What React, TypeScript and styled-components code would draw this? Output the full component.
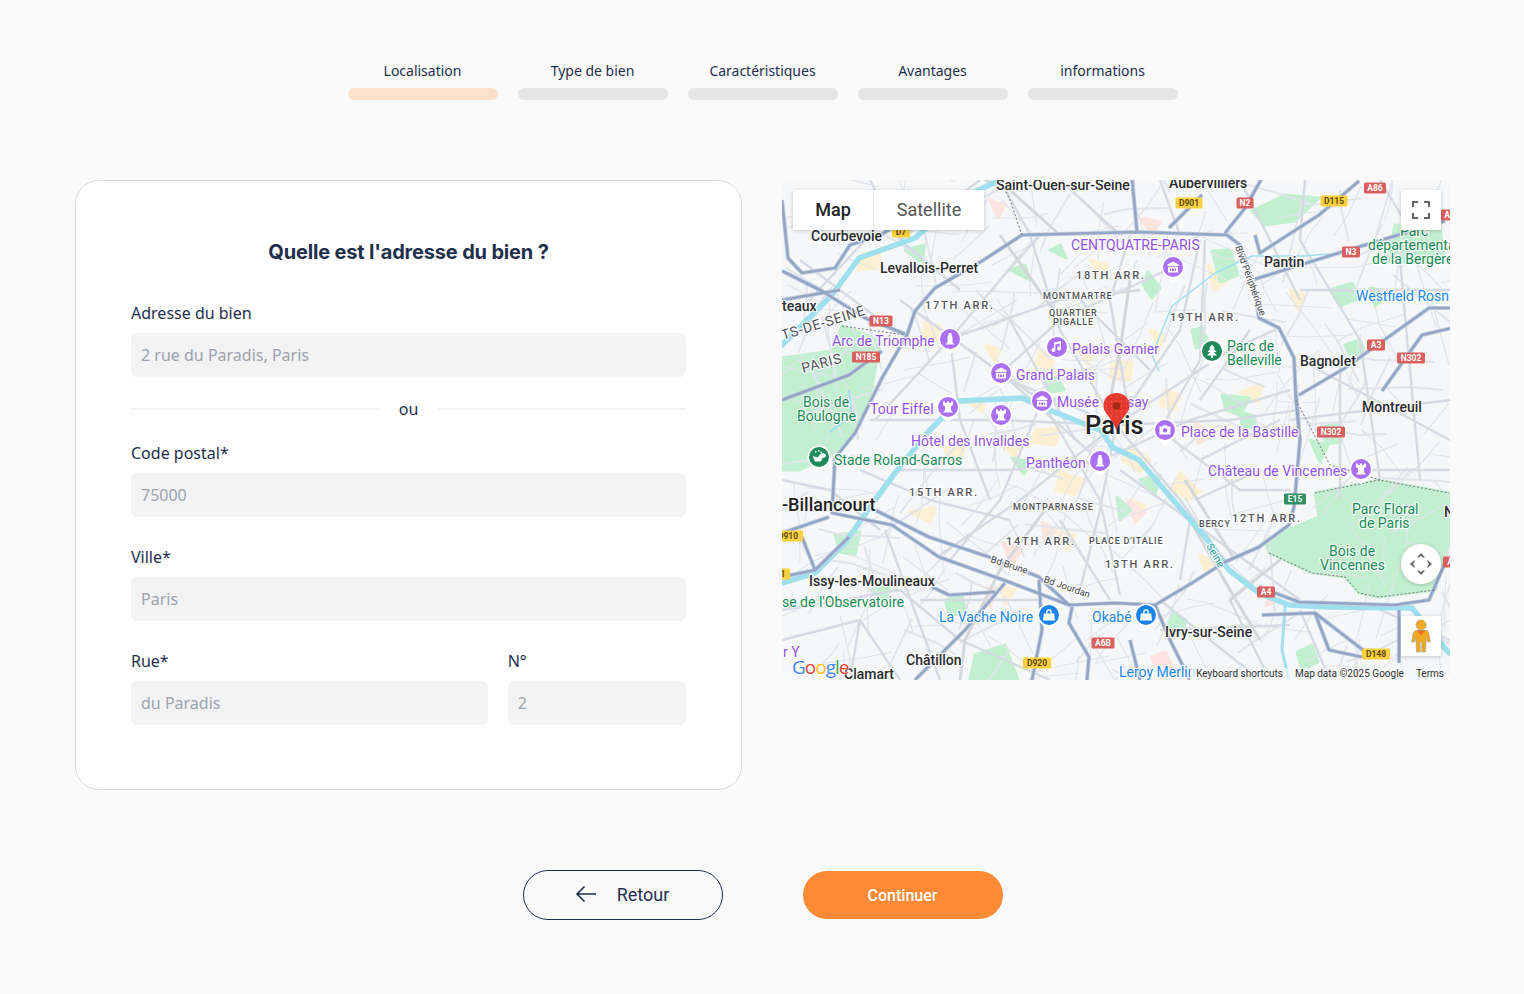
import React from "react";
import styled, { createGlobalStyle } from "styled-components";

const Global = createGlobalStyle`
  html, body { margin: 0; padding: 0; background: #fafafa; }
  body { font-family: "Noto Sans", "Open Sans", sans-serif; color: #1e2f4d; }
  * { box-sizing: border-box; }
`;

const Page = styled.div`
  width: 1524px; height: 994px; display: flex; flex-direction: column; align-items: center;
`;
const Stepper = styled.nav`
  display: flex; gap: 20px; padding-top: 60px; height: 180px; margin-left: 1px;
`;
const Step = styled.div`
  width: 150px; display: flex; flex-direction: column; align-items: center; gap: 6px;
`;
const StepLabel = styled.span`
  font-size: 14px; line-height: 22px; letter-spacing: -0.01px; color: #1e2f4d;
`;
const StepBar = styled.span<{ $active?: boolean }>`
  width: 100%; height: 12px; border-radius: 6px; background: ${p => (p.$active ? "#ffe0cb" : "#e5e5e6")};
`;
const Columns = styled.main`
  width: 1375px; display: grid; grid-template-columns: 667px 668px; gap: 40px; align-items: start; margin-left: 1px;
`;
const Card = styled.section`
  height: 610px; background: #fff; border: 1px solid #d8dae0; border-radius: 24px; padding: 56px 55px 64px 55px;
  display: flex; flex-direction: column;
`;
const Title = styled.h1`
  margin: 1px 0 35px; font: 700 20px/28px Inter, "Noto Sans", sans-serif; letter-spacing: -0.18px; text-align: center; color: #1e2f4d;
`;
const Field = styled.label`
  display: flex; flex-direction: column; gap: 8px; min-width: 0;
`;
const FieldLabel = styled.span`
  font-size: 16px; line-height: 24px; color: #1e2f4d;
`;
const Input = styled.input`
  width: 100%; height: 44px; border: 0; border-radius: 6px; background: #f3f3f4; padding: 0 10px;
  font: 400 16px "Noto Sans", sans-serif; color: #9ca3af; outline: none;
  &::placeholder { color: #9ca3af; opacity: 1; }
`;
const Divider = styled.div`
  display: flex; align-items: center; gap: 20px; margin: 20px 0; font-size: 16px; line-height: 24px;
  &::before, &::after { content: ""; flex: 1; height: 2px; background: #f3f3f4; }
`;
const Stack = styled.div`
  display: flex; flex-direction: column; gap: 28px;
`;
const TwoCols = styled.div`
  display: grid; grid-template-columns: 2fr 1fr; gap: 20px;
`;
const MapFrame = styled.div`
  position: relative; height: 500px; border-radius: 10px; overflow: hidden; background: #f6f7f8;
`;
const MapSvg = styled.svg`
  display: block; width: 100%; height: 100%;
`;
const MapLabel = styled.text<{ $c: string; $s: number; $w?: number; $ls?: number }>`
  font-family: Roboto, sans-serif; font-size: ${p => p.$s}px; font-weight: ${p => p.$w ?? 400};
  letter-spacing: ${p => p.$ls ?? 0}px; fill: ${p => p.$c};
  paint-order: stroke; stroke: rgba(255,255,255,.85); stroke-width: 2.5px; stroke-linejoin: round;
`;
const Badge = styled.text`
  font: 700 8.5px Roboto, sans-serif; text-anchor: middle;
`;
const MapTypes = styled.div`
  position: absolute; left: 11px; top: 10px; display: flex; height: 40px; background: #fff; box-shadow: 0 1px 4px rgba(0,0,0,.2);
`;
const MapType = styled.button<{ $on?: boolean }>`
  border: 0; background: #fff; padding: 0 0 2px; width: ${p => (p.$on ? "80px" : "111px")}; margin: 0;
  font: ${p => (p.$on ? 500 : 400)} 18px Roboto, sans-serif; color: ${p => (p.$on ? "#222" : "#565656")};
  & + & { border-left: 1px solid #eee; }
`;
const MapControl = styled.button<{ $round?: boolean; $top?: number }>`
  position: absolute; right: 9.5px; width: 40px; height: 40px; border: 0; padding: 0; background: #fff;
  top: ${p => `${p.$top ?? 0}px`};
  border-radius: ${p => (p.$round ? "50%" : "0")}; box-shadow: 0 1px 4px rgba(0,0,0,.2);
  display: flex; align-items: center; justify-content: center;
`;
const Attribution = styled.div`
  position: absolute; right: 0; bottom: 0; height: 12px; display: flex; align-items: center;
  font: 400 10px Roboto, sans-serif; color: #333;
`;
const AttrItem = styled.span`
  background: rgba(246,247,248,.75); padding: 0 6px; line-height: 12px; white-space: nowrap;
`;
const GoogleLogo = styled.div`
  position: absolute; left: 10px; bottom: 2px; font: 400 19px/22px "Open Sans", sans-serif; letter-spacing: -1px;
  text-shadow: 0 0 2px #fff, 0 0 2px #fff;
`;
const Letter = styled.span<{ $c: string }>`
  color: ${p => p.$c};
`;
const Actions = styled.footer`
  display: flex; gap: 80px; justify-content: center; align-items: center; height: 50px; margin-top: 80px; margin-left: 1px;
`;
const BackButton = styled.button`
  width: 200px; height: 50px; border: 1px solid #1e2f4d; border-radius: 25px; background: transparent; color: #1e2f4d;
  font: 400 18px Roboto, sans-serif; display: flex; align-items: center; justify-content: center; gap: 20px; padding: 0 1px 2px 0;
`;
const NextButton = styled.button`
  width: 200px; height: 48px; border: 0; border-radius: 24px; background: #ff8a36; color: #fff;
  font: 500 16px Roboto, sans-serif;
`;

const major = [
  "1022,235 982,261 935,288 915,311 907,335 882,378 855,433 835,458 832,513 892,525 939,557 1009,582 1069,605 1115,603 1155,605 1192,583 1225,562 1259,547 1289,525 1294,507 1300,440 1296,400 1294,358 1279,328 1259,318 1252,278 1240,245 1227,235 1137,232 1022,235",
  "875,510 929,537 989,557 1039,577 1069,605",
  "782,271 822,291 865,318 905,334",
  "782,400 849,375 882,351",
  "1132,178 1137,232", "1169,228 1202,195", "1225,233 1245,208 1262,178",
  "1255,235 1260,253 1319,215 1359,181", "1252,280 1345,251 1445,221",
  "1299,395 1345,368 1429,308 1452,308", "1382,391 1422,335 1452,328",
  "1259,587 1299,602 1395,605 1429,600 1445,563", "1399,610 1399,663", "1262,615 1315,613 1372,657",
  "1315,613 1329,650 1362,657", "1072,607 1069,623 1089,657 1087,680", "1039,580 1042,630 1032,680",
  "1005,583 965,630 915,680", "932,587 949,595 995,592", "782,577 815,570 849,537", "815,570 802,537",
  "782,533 829,517", "782,200 788,258 802,273 835,268 850,245 880,235 925,210", "782,300 840,290",
  "1296,395 1299,430", "1155,605 1170,640 1190,680", "1130,640 1140,680",
];
const minor = [
  "1116,425 1060,330 1030,235", "1116,425 1180,330 1200,240", "1116,425 1010,380 915,311", "1116,425 1000,420 870,420",
  "1116,425 1020,500 940,555", "1116,425 1100,510 1080,590", "1116,425 1180,500 1225,560", "1116,425 1230,420 1298,410",
  "1116,425 1230,350 1275,330", "950,339 1000,280 1040,235", "950,339 1060,300 1140,290", "950,339 960,420 990,500",
  "950,339 875,420", "900,300 1001,373 1100,461", "1173,267 1060,320 1001,373", "1001,373 1042,401 1100,500 1120,595",
  "1042,401 1000,500 950,560", "1100,461 1190,420 1290,390", "1100,461 1010,470 900,470", "1160,430 1240,490 1290,490",
  "1160,430 1200,360 1205,240", "1290,420 1450,400", "1300,360 1450,440", "1300,290 1450,290", "1300,240 1360,340 1380,480",
  "1295,470 1450,470", "1340,360 1340,500", "1400,260 1420,480", "1000,180 1030,235", "1060,180 1120,235", "1130,235 1110,300 1130,420",
  "1160,180 1180,235", "870,180 900,240 960,290", "800,260 880,320", "800,310 870,235", "900,240 980,180", "782,480 830,490 880,530",
  "860,470 930,500 1010,520", "885,530 940,680", "782,610 900,590 960,640 1050,680", "782,640 860,620 900,680", "860,620 850,680",
  "920,600 1040,600", "1060,520 1110,600", "1120,470 1300,600", "1190,520 1180,580", "1160,600 1260,680", "1230,600 1270,680",
  "1300,610 1330,680", "1160,630 1290,625", "1380,610 1450,640", "1200,460 1280,420", "1240,180 1300,300", "1300,240 1305,180",
  "1380,180 1410,230", "1250,330 1200,400", "1195,500 1260,470", "1010,320 1075,440", "1080,300 1150,370",
];
const railway = [
  "1060,235 1010,190 985,180", "1130,280 1120,350 1110,400", "1000,235 1060,320", "1190,520 1230,590 1260,640", "1185,480 1235,560", "960,680 965,640 1000,570 1045,510", "1230,600 1280,560",
];
const greens = [
  "842,326 880,340 870,400 850,440 830,455 800,470 782,470 782,358 832,351",
  "1315,493 1379,480 1449,493 1449,543 1435,590 1379,597 1359,593 1345,577 1312,573 1269,553 1265,540 1319,517",
  "1252,211 1285,195 1319,198 1295,221 1265,225", "1212,251 1230,250 1238,275 1220,282", "1192,330 1203,328 1208,343 1196,348",
  "1222,395 1250,398 1240,415 1226,410", "1330,290 1352,283 1360,298 1340,306", "1370,288 1392,292 1375,306", "1395,225 1440,228 1445,262 1388,262",
  "835,535 860,532 855,555 840,552", "975,655 1005,645 1018,680 970,680", "1045,380 1058,377 1064,390 1050,392", "1148,272 1160,288 1152,298 1143,285",
  "1240,412 1254,416 1256,428 1242,426", "1012,458 1030,462 1024,474", "1117,497 1131,510 1120,520", "1322,427 1338,424 1342,442 1326,444",
  "1297,652 1312,645 1318,662 1302,670", "1172,612 1186,620 1182,634 1168,630", "1310,440 1328,445 1320,462", "905,250 925,245 922,262", "1010,270 1025,265 1030,280",
  "1050,250 1060,245 1066,258", "945,600 962,595 966,612 950,616", "870,590 890,585 886,602", "1345,345 1360,340 1365,352 1350,356", "1140,480 1160,475 1155,495",
];
const peach = [
  "925,322 940,326 938,340 922,336", "1040,350 1055,355 1050,370 1036,364", "1112,362 1132,362 1130,380 1110,378", "1130,445 1150,460 1140,472 1122,460",
  "1002,442 1020,445 1014,458", "1060,472 1085,480 1075,495 1056,490", "910,512 935,508 930,522", "1180,472 1200,492 1188,500 1172,488", "945,447 965,444 962,460 948,460",
  "1208,265 1226,282 1214,290", "1240,392 1262,385 1258,402", "1165,390 1180,395 1175,410 1160,405", "1075,345 1095,350 1088,365", "985,345 1000,350 995,362",
  "1150,330 1165,335 1160,348", "1090,260 1108,265 1102,278", "1055,530 1075,535 1068,550", "1000,585 1015,590 1005,605", "1290,290 1305,295 1298,310", "860,255 880,250 878,268 858,270", "1200,555 1214,562 1206,575",
  "1128,500 1145,505 1138,520", "965,400 985,398 982,412", "1035,430 1060,428 1055,445 1032,442",
];
const pink = [
  "1127,500 1145,512 1135,522", "1042,522 1056,530 1045,542", "987,587 998,590 990,606", "1270,592 1280,600 1266,606", "1195,422 1212,436 1198,444", "1152,657 1160,678 1174,672 1166,652", "1002,542 1022,550 1012,565", "1140,218 1160,222 1152,235", "990,200 1005,205 998,218",
];

function buildStreets(): string[] {
  let seed = 73;
  const rnd = () => { seed = (seed * 1664525 + 1013904223) % 4294967296; return seed / 4294967296; };
  const out: string[] = [];
  for (let i = 0; i < 340; i++) {
    const x = 782 + rnd() * 668, y = 180 + rnd() * 500;
    const a = rnd() * Math.PI * 2, l = 18 + rnd() * 46;
    const b = a + (rnd() - 0.5) * 0.5, m = 10 + rnd() * 24;
    const x2 = x + Math.cos(a) * l, y2 = y + Math.sin(a) * l;
    out.push(`${x.toFixed(0)},${y.toFixed(0)} ${x2.toFixed(0)},${y2.toFixed(0)} ${(x2 + Math.cos(b) * m).toFixed(0)},${(y2 + Math.sin(b) * m).toFixed(0)}`);
  }
  return out;
}
const streets = buildStreets();

type K = "city" | "arr" | "small" | "purple" | "green" | "blue";
const styles: Record<K, { c: string; s: number; w?: number; ls?: number }> = {
  city: { c: "#2a2a2e", s: 14, w: 500 },
  arr: { c: "#55565c", s: 11, w: 500, ls: 1.75 },
  small: { c: "#4f5055", s: 9, w: 500, ls: 0.8 },
  purple: { c: "#9252ea", s: 14, ls: 0.02 },
  green: { c: "#188a58", s: 14 },
  blue: { c: "#2186ea", s: 14 },
};
const labels: [string, number, number, K][] = [
  ["Saint-Ouen-sur-Seine", 996, 190, "city"], ["Aubervilliers", 1169, 188, "city"], ["Courbevoie", 811, 241, "city"],
  ["Levallois-Perret", 880, 273, "city"], ["teaux", 782, 311, "city"], ["Pantin", 1264, 267, "city"], ["Bagnolet", 1300, 366, "city"],
  ["Montreuil", 1362, 412, "city"], ["Issy-les-Moulineaux", 809, 586, "city"], ["Châtillon", 906, 665, "city"], ["Clamart", 844, 679, "city"],
  ["Ivry-sur-Seine", 1165, 637, "city"], ["N", 1444, 517, "city"],
  ["18TH ARR.", 1076, 279, "arr"], ["17TH ARR.", 925, 309, "arr"], ["19TH ARR.", 1170, 321, "arr"], ["15TH ARR.", 909, 496, "arr"],
  ["14TH ARR.", 1006, 545, "arr"], ["13TH ARR.", 1105, 568, "arr"], ["12TH ARR.", 1232, 522, "arr"],
  ["MONTMARTRE", 1043, 299, "small"], ["QUARTIER", 1049, 316, "small"], ["PIGALLE", 1053, 325, "small"], ["MONTPARNASSE", 1013, 510, "small"],
  ["PLACE D'ITALIE", 1089, 544, "small"], ["BERCY", 1199, 527, "small"],
  ["CENTQUATRE-PARIS", 1071, 250, "purple"], ["Arc de Triomphe", 832, 346, "purple"], ["Palais Garnier", 1072, 354, "purple"], ["Grand Palais", 1016, 380, "purple"],
  ["Musée", 1057, 407, "purple"], ["say", 1127, 407, "purple"], ["Tour Eiffel", 870, 414, "purple"], ["Hôtel des Invalides", 911, 446, "purple"],
  ["Panthéon", 1026, 468, "purple"], ["Place de la Bastille", 1181, 437, "purple"], ["Château de Vincennes", 1208, 476, "purple"], ["r Y", 783, 657, "purple"],
  ["Bois de", 803, 407, "green"], ["Boulogne", 797, 421, "green"], ["Stade Roland-Garros", 834, 465, "green"], ["Parc de", 1227, 351, "green"], ["Belleville", 1227, 365, "green"],
  ["Parc", 1400, 236, "green"], ["départementa", 1368, 250, "green"], ["de la Bergère", 1372, 264, "green"], ["Parc Floral", 1352, 514, "green"], ["de Paris", 1359, 528, "green"],
  ["Bois de", 1329, 556, "green"], ["Vincennes", 1320, 570, "green"], ["se de l'Observatoire", 782, 607, "green"],
  ["Westfield Rosn", 1356, 301, "blue"], ["La Vache Noire", 939, 622, "blue"], ["Okabé", 1092, 622, "blue"], ["Leroy Merlin", 1119, 677, "blue"],
];
const turned: [string, number, number, number, string, number, number?][] = [
  ["TS-DE-SEINE", 783, 340, -17, "#55565c", 14, 0.7], ["PARIS", 803, 373, -15, "#55565c", 14, 0.7],
  ["Blvd Périphérique", 1235, 247, 70, "#44454a", 9.5], ["Bd Brune", 990, 562, 18, "#44454a", 9.5], ["Bd Jourdan", 1043, 582, 19, "#44454a", 9.5], ["Seine", 1206, 546, 60, "#2f9d9b", 10.5],
];
const badges: [string, number, number, string, number][] = [
  ["N13", 881, 321, "r", 23], ["N185", 866, 357, "r", 28], ["N3", 1351, 252, "r", 18], ["N2", 1245, 203, "r", 17], ["A86", 1375, 188, "r", 22], ["D901", 1189, 203, "y", 27],
  ["D115", 1334, 201, "y", 27], ["A3", 1376, 345, "r", 18], ["N302", 1411, 358, "r", 28], ["N302", 1331, 432, "r", 28], ["E15", 1295, 499, "g", 22], ["A4", 1266, 592, "r", 18],
  ["A6B", 1103, 643, "r", 23], ["D920", 1037, 663, "y", 28], ["D148", 1376, 654, "y", 28], ["D910", 788, 536, "y", 30], ["D7", 901, 232, "y", 18], ["A86", 1452, 215, "r", 22], ["A", 1450, 562, "r", 14], ["1", 783, 574, "y", 14],
];
const badgeFill: Record<string, [string, string]> = { r: ["#d9605c", "#fff"], y: ["#fcd03f", "#5c4a10"], g: ["#2f8f62", "#fff"] };

type G = "monument" | "castle" | "music" | "museum" | "camera" | "tree" | "lock" | "stadium";
const pins: [number, number, string, G][] = [
  [1173, 267, "#ab6ff3", "museum"], [950, 339, "#ab6ff3", "monument"], [1057, 347, "#ab6ff3", "music"], [1001, 373, "#ab6ff3", "museum"], [1042, 401, "#ab6ff3", "museum"],
  [948, 407, "#ab6ff3", "castle"], [1001, 415, "#ab6ff3", "castle"], [1100, 461, "#ab6ff3", "monument"], [1165, 430, "#ab6ff3", "camera"], [1361, 469, "#ab6ff3", "castle"],
  [1049, 615, "#1a84ea", "lock"], [1146, 615, "#1a84ea", "lock"], [1212, 351, "#218a5a", "tree"], [819, 457, "#218a5a", "stadium"],
];
const Glyph: React.FC<{ g: G }> = ({ g }) => {
  switch (g) {
    case "monument": return <path d="M-1.5-6h3v2l1 2v5l2 2.5h-9l2-2.5v-5l1-2z" fill="#fff" />;
    case "castle": return <path d="M-5-5.5h2v1.6h2v-1.6h2v1.6h2v-1.6h2V-2l-2 1.500V3l2 2.500h-10L-3 3v-3.500L-5-2z" fill="#fff" />;
    case "music": return <path d="M-3-4.500l7-1.500v7.500a2 2 0 1 1-1.400-1.900V-3.500l-4.200 1V3a2 2 0 1 1-1.400-1.900z" fill="#fff" />;
    case "museum": return <path d="M-5.500-2.500L0-5.500l5.500 3V-1h-11zM-5-.2h10v5.700h-10zM-3 1.400V4h1.200V1.400zM1.800 1.400V4H3V1.400zM-1 1.400V4h2V1.400z" fill="#fff" fillRule="evenodd" />;
    case "camera": return <path fillRule="evenodd" d="M-5.500-3.500h3L-1.200-5h2.400l1.300 1.500h3v8h-11zM0-2a2.300 2.300 0 1 0 .01 0z" fill="#fff" />;
    case "tree": return <path d="M0-6.500l3 4H1.500l3 3.500H2L5 4.500H1V7h-2V4.500h-4l3-3.500h-2.500l3-3.500H-3z" fill="#fff" />;
    case "lock": return <path fillRule="evenodd" d="M-5.200-1.500h10.400l.8 7H-6zM-2.800-1.500V-3a2.800 2.800 0 0 1 5.600 0v1.500H1.500V-3a1.500 1.500 0 0 0-3 0v1.500z" fill="#fff" />;
    default: return (
      <g fill="#fff">
        <path d="M-6.500-1.500C-5-.5-3.500 0-1.500.5L2-3.500c2-.5 4.500 0 5 1.500.3 1.500-1 3-3.500 3L2 4.500h-6L-5 2z" />
        <path d="M-4-6h1.400v1.400H-4zM-1-7H.4v1.400H-1zM1.500-5.500h1.400v1.400H1.500z" />
      </g>
    );
  }
};
const pinDots = Array.from({ length: 25 }, (_, i) => [((i % 5) - 2) * 5, (Math.floor(i / 5) - 2) * 5]);

const ParisMap = () => (
  <MapSvg viewBox="782 180 668 500" aria-label="Carte de Paris">
    <rect x="782" y="180" width="668" height="500" fill="#f6f7f8" />
    <g strokeWidth="3" strokeLinejoin="round">
      {peach.map(p => <polygon key={p} points={p} fill="#fdf0d2" stroke="#fdf0d2" />)}
      {pink.map(p => <polygon key={p} points={p} fill="#fde4de" stroke="#fde4de" />)}
      {greens.map(p => <polygon key={p} points={p} fill="#c2efd0" stroke="#c2efd0" />)}
    </g>
    {streets.map((p, i) => <polyline key={i} points={p} fill="none" stroke="#e1e4ea" strokeWidth={i % 4 === 0 ? 2 : 1.2} strokeLinejoin="round" />)}
    {minor.map(p => <polyline key={p} points={p} fill="none" stroke="#d5dae3" strokeWidth="2.4" strokeLinejoin="round" />)}
    {railway.map(p => <polyline key={p} points={p} fill="none" stroke="#d4d6da" strokeWidth="3" strokeLinejoin="round" />)}
    <g fill="none" stroke="#9fe0ef" strokeLinejoin="round" strokeLinecap="round">
      <polyline strokeWidth="5.500" points="782,583 815,573 845,543 875,500 895,473 929,431 959,401 1022,398 1052,411 1102,431 1112,447 1139,460 1162,487 1205,537 1229,570 1259,593 1289,605 1329,607 1412,608 1449,653" />
      <polyline strokeWidth="5.500" points="782,345 832,295 859,258 915,238 962,198 998,181" />
      <polyline strokeWidth="3" points="1285,607 1282,650 1289,680" />
      <polyline strokeWidth="1.500" points="1159,371 1152,355 1172,306 1215,273 1252,256 1302,256 1345,253" />
      <polyline strokeWidth="2" points="849,391 852,415 830,432" />
    </g>
    {major.map(p => <polyline key={p} points={p} fill="none" stroke="#c5cfe0" strokeWidth="4.200" strokeLinejoin="round" />)}
    {major.map(p => <polyline key={p} points={p} fill="none" stroke="#93a6c6" strokeWidth="2.600" strokeLinejoin="round" />)}
    <g fill="none" stroke="#777" strokeWidth="1" strokeDasharray="2 2">
      <polyline points="1022,235 1010,200 1000,180" />
      <polyline points="842,326 905,335" />
      <polyline points="1315,493 1379,480 1449,493" />
      <polyline points="1269,553 1312,573 1345,577 1359,593 1379,597 1435,590" />
      <polyline points="1296,400 1330,465 1380,480" />
    </g>
    {badges.map(([t, x, y, k, w], i) => (
      <g key={i}>
        <rect x={x - w / 2} y={y - 5.500} width={w} height={11} rx="1.500" fill={badgeFill[k][0]} />
        <Badge x={x} y={y + 3} fill={badgeFill[k][1]}>{t}</Badge>
      </g>
    ))}
    {labels.map(([t, x, y, k], i) => (
      <MapLabel key={i} x={x} y={y} $c={styles[k].c} $s={styles[k].s} $w={styles[k].w} $ls={styles[k].ls}>{t}</MapLabel>
    ))}
    {turned.map(([t, x, y, r, c, s, ls], i) => (
      <MapLabel key={i} x={x} y={y} $c={c} $s={s} $ls={ls} transform={`rotate(${r} ${x} ${y})`}>{t}</MapLabel>
    ))}
    <MapLabel x={1085} y={434} $c="#222" $s={25.500} $w={500}>Paris</MapLabel>
    <MapLabel x={782} y={511} $c="#222" $s={18} $w={500}>-Billancourt</MapLabel>
    {pins.map(([x, y, c, g], i) => (
      <g key={i} transform={`translate(${x} ${y})`}>
        <path d="M-7 9.500L0 15.500L7 9.500z" fill="#fff" />
        <circle r="11.500" fill="#fff" />
        <circle r="10" fill={c} />
        <Glyph g={g} />
      </g>
    ))}
    <g transform="translate(1116.500 393)">
      <path d="M0 0C-7.500 0-13 5.400-13 12.500c0 8 7 10 13 24.500c6-14.500 13-16.500 13-24.500C13 5.400 7.500 0 0 0z" fill="#e5392f" />
      {pinDots.map(([x, y], i) => <circle key={i} cx={x} cy={y + 13} r=".6" fill="#f3867c" />)}
      <circle cy="13" r="3.800" fill="#a52714" />
    </g>
  </MapSvg>
);

const fields = { code: "75000", ville: "Paris", rue: "du Paradis", num: "2" };

export default function App() {
  return (
    <Page>
      <Global />
      <Stepper>
        {["Localisation", "Type de bien", "Caractéristiques", "Avantages", "informations"].map((s, i) => (
          <Step key={s}>
            <StepLabel>{s}</StepLabel>
            <StepBar $active={i === 0} />
          </Step>
        ))}
      </Stepper>
      <Columns>
        <Card>
          <Title>Quelle est l'adresse du bien ?</Title>
          <Field>
            <FieldLabel>Adresse du bien</FieldLabel>
            <Input placeholder="2 rue du Paradis, Paris" readOnly />
          </Field>
          <Divider>ou</Divider>
          <Stack>
            <Field>
              <FieldLabel>Code postal*</FieldLabel>
              <Input value={fields.code} readOnly />
            </Field>
            <Field>
              <FieldLabel>Ville*</FieldLabel>
              <Input value={fields.ville} readOnly />
            </Field>
            <TwoCols>
              <Field>
                <FieldLabel>Rue*</FieldLabel>
                <Input value={fields.rue} readOnly />
              </Field>
              <Field>
                <FieldLabel>N°</FieldLabel>
                <Input value={fields.num} readOnly />
              </Field>
            </TwoCols>
          </Stack>
        </Card>
        <MapFrame>
          <ParisMap />
          <MapTypes>
            <MapType $on>Map</MapType>
            <MapType>Satellite</MapType>
          </MapTypes>
          <MapControl $top={10} aria-label="Plein écran">
            <svg width="18" height="18" viewBox="0 0 18 18" fill="none" stroke="#666" strokeWidth="2">
              <path d="M1 6V1h5M12 1h5v5M17 12v5h-5M6 17H1v-5" />
            </svg>
          </MapControl>
          <MapControl $round $top={364} aria-label="Déplacer">
            <svg width="26" height="26" viewBox="0 0 26 26" fill="#666">
              <path d="M13 2l4 4.500h-8zM13 24l4-4.500h-8zM2 13l4.500-4v8zM24 13l-4.500-4v8z" />
              <path d="M13 4.800l2.200 2.500h-4.400zM13 21.200l2.200-2.500h-4.400zM4.800 13l2.500-2.200v4.400zM21.200 13l-2.500-2.200v4.400z" fill="#fff" />
            </svg>
          </MapControl>
          <MapControl $top={436} aria-label="Street View">
            <svg width="20" height="34" viewBox="0 0 20 34">
              <circle cx="10" cy="6" r="5" fill="#f2a91f" stroke="#a9a28f" strokeWidth=".7" />
              <path d="M5 11.500h10c1.500 0 2.300 1 2.700 2.500L19.500 23h-3l-1.300-5L14.500 33H10.800v-10H9.200v10H5.500L4.800 18l-1.300 5h-3L2.300 14c.4-1.500 1.200-2.500 2.700-2.500z" fill="#f2a91f" stroke="#a9a28f" strokeWidth=".7" />
              <path d="M5.500 11.500h9L10 16.500z" fill="#ec6f2a" />
            </svg>
          </MapControl>
          <GoogleLogo>
            <Letter $c="#4285f4">G</Letter><Letter $c="#ea4335">o</Letter><Letter $c="#fbbc05">o</Letter><Letter $c="#4285f4">g</Letter><Letter $c="#34a853">l</Letter><Letter $c="#ea4335">e</Letter>
          </GoogleLogo>
          <Attribution>
            <AttrItem>Keyboard shortcuts</AttrItem>
            <AttrItem>Map data ©2025 Google</AttrItem>
            <AttrItem>Terms</AttrItem>
          </Attribution>
        </MapFrame>
      </Columns>
      <Actions>
        <BackButton>
          <svg width="22" height="18" viewBox="0 0 22 18" fill="none" stroke="#1e2f4d" strokeWidth="1.600">
            <path d="M21 9H2M9.500 1.500L2 9l7.500 7.500" />
          </svg>
          Retour
        </BackButton>
        <NextButton>Continuer</NextButton>
      </Actions>
    </Page>
  );
}
